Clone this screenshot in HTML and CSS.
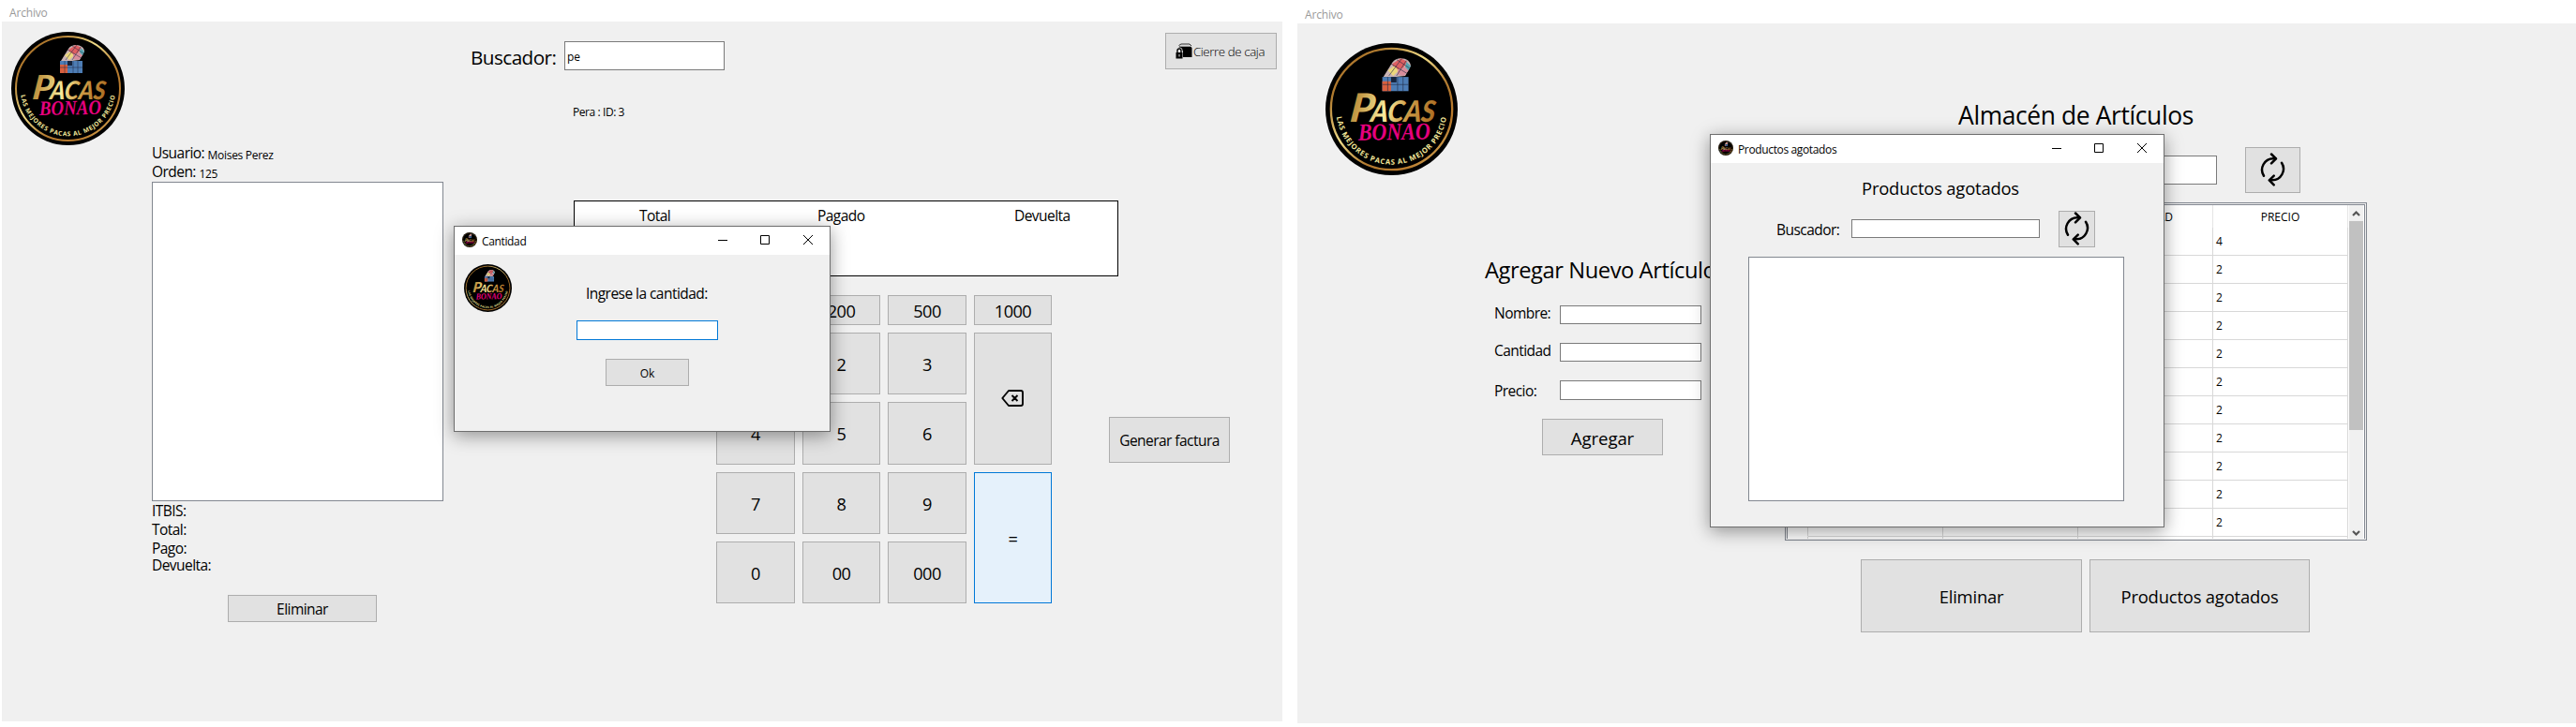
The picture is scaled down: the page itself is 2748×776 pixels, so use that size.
FILE: index.html
```html
<!DOCTYPE html>
<html lang="es">
<head>
<meta charset="utf-8">
<title>Pacas Bonao</title>
<link rel="stylesheet" href="styles.css">
</head>
<body>
<svg class="defs" aria-hidden="true">
  <defs>
    <linearGradient id="gold" gradientUnits="userSpaceOnUse" x1="22" x2="103" y1="50" y2="62">
      <stop offset="0" stop-color="#b5832f"/><stop offset=".4" stop-color="#f8ec9c"/><stop offset=".62" stop-color="#d0a04a"/><stop offset="1" stop-color="#a8681f"/>
    </linearGradient>
    <linearGradient id="ring" x1="0" x2="1" y1="0" y2="1">
      <stop offset="0" stop-color="#a8702a"/><stop offset=".2" stop-color="#b07a2e"/><stop offset=".42" stop-color="#f0dc88"/><stop offset=".62" stop-color="#b27a30"/><stop offset=".8" stop-color="#b8792c"/><stop offset="1" stop-color="#e6cf7c"/>
    </linearGradient>
    <path id="curve" d="M10 66A50.800 50.800 0 0 0 111 66"/>
  </defs>
  <symbol id="logo" viewBox="0 0 121 121">
    <circle cx="60.5" cy="60.5" r="60.5" fill="#000"/>
    <circle cx="60.5" cy="60.5" r="55.5" fill="none" stroke="url(#ring)" stroke-width="2"/>
    <path d="M52 31h24v13H52z" fill="#4d7db5"/>
    <path d="M52 35h8v9h-8z" fill="#d9603f"/>
    <path d="M60 31h5v5h-5z" fill="#16243c"/>
    <path d="M53 31l8-13c2-3 5-4 8-4 5 0 9 3 9 7l-5 9-8 1z" fill="#c9b3b4"/>
    <path d="M61 19l8-5 6 3-4 6-7 2z" fill="#df5f62"/>
    <path d="M57 25l6-4 4 4-5 5z" fill="#ecd77c"/>
    <path d="M66 24l7-2 3 3-4 5-6-1z" fill="#d98d9b"/>
    <path d="M74 17l4 4-2 4-3-3z" fill="#58a5b2"/>
    <path d="M52 38h24M57 31v13M66 31v13M71 31v13M60 19l15 9M65 15l12 8M58 30l12-16M65 30l9-14" fill="none" stroke="#1d2740" stroke-width=".5"/>
    <g fill="url(#gold)" transform="translate(8.500 0) skewX(-7)" font-family="Lato, sans-serif" font-weight="900" font-style="italic">
      <text x="22" y="72" font-size="36" textLength="22" lengthAdjust="spacingAndGlyphs">P</text>
      <text x="41" y="72" font-size="27" textLength="59" lengthAdjust="spacingAndGlyphs">ACAS</text>
    </g>
    <text x="30" y="88.5" transform="rotate(-1 60 88)" fill="#e6007e" font-family="Liberation Serif, serif" font-weight="700" font-style="italic" font-size="22" textLength="66" lengthAdjust="spacingAndGlyphs">BONAO</text>
    <text fill="#f3e79a" font-family="Open Sans, sans-serif" font-weight="700" font-size="6.6" letter-spacing=".62" text-anchor="middle"><textPath href="#curve" startOffset="50%">LAS MEJORES PACAS AL MEJOR PRECIO</textPath></text>
  </symbol>
  <symbol id="refresh" viewBox="0 0 27 36">
    <g fill="none" stroke="#000" stroke-width="2.5" stroke-linecap="round" stroke-linejoin="round">
      <path d="M4 24.7A12 12 0 0 1 14 6.2h2.5"/>
      <path d="M12 1.5l5 4.8-5 5"/>
      <path d="M23 10.8A12 12 0 0 1 13 29.3h-2.500"/>
      <path d="M14.700 24.700l-4.900 4.700 4.900 4.900"/>
    </g>
  </symbol>
  <symbol id="controls" viewBox="0 0 102 12">
    <path d="M0 6.500h10M45.500 1.500h9v9h-9zM91 1l10 10M101 1L91 11" fill="none" stroke="#000"/>
  </symbol>
</svg>

<main class="desktop">
  <section class="window window-sales">
    <header class="menu">Archivo</header>
    <div class="client">
      <div class="side"><svg class="logo"><use href="#logo"/></svg></div>

      <div class="order">
        <div class="line">Usuario: <span class="value">Moises Perez</span></div>
        <div class="line">Orden: <span class="value">125</span></div>
        <div class="list order-list"></div>
        <div class="line">ITBIS:</div>
        <div class="line">Total:</div>
        <div class="line">Pago:</div>
        <div class="line line-tight">Devuelta:</div>
        <button class="btn btn-remove">Eliminar</button>
      </div>

      <div class="register">
        <div class="search"><span class="search-label">Buscador:</span><span class="field search-field">pe</span></div>
        <div class="match">Pera : ID: 3</div>
        <div class="totals"><span>Total</span><span>Pagado</span><span>Devuelta</span></div>
        <div class="keypad">
          <button class="btn">100</button><button class="btn">200</button><button class="btn">500</button><button class="btn">1000</button>
          <button class="btn">1</button><button class="btn">2</button><button class="btn">3</button>
          <button class="btn key-tall key-back" aria-label="Borrar"><svg width="24" height="18" viewBox="0 0 24 18"><path d="M8 1h13q2 0 2 2v12q0 2-2 2H8L1.300 9zM11.500 6l6 6M17.500 6l-6 6" fill="none" stroke="#000" stroke-width="1.900" stroke-linejoin="round"/></svg></button>
          <button class="btn">4</button><button class="btn">5</button><button class="btn">6</button>
          <button class="btn">7</button><button class="btn">8</button><button class="btn">9</button>
          <button class="btn key-tall key-equal">=</button>
          <button class="btn">0</button><button class="btn">00</button><button class="btn">000</button>
        </div>
      </div>

      <div class="actions">
        <button class="btn btn-close"><svg width="18" height="17" viewBox="0 0 18 17"><path d="M4 3.500h12l1.500 1.500v10H8V9L5 5H3.500z"/><path d="M3.500 2.500L6 1h9l2 2" fill="none" stroke="#333"/><path d="M5 3.200h11" stroke="#bbb" stroke-width=".8"/><path d="M.5 10h7v6.500h-7z"/><path d="M2 10V8a2 2 0 0 1 4 0v2" fill="none" stroke="#e1e1e1" stroke-width="3"/><path d="M2 10.500V8a2 2 0 0 1 4 0v2.500" fill="none" stroke="#000" stroke-width="1.400"/><path d="M4 12v2.500" stroke="#ddd"/></svg><span>Cierre de caja</span></button>
        <button class="btn btn-invoice">Generar factura</button>
      </div>
    </div>
  </section>

  <section class="window window-stock">
    <header class="menu">Archivo</header>
    <div class="client">
      <div class="side"><svg class="logo"><use href="#logo"/></svg></div>

      <div class="form">
        <h2>Agregar Nuevo Artículo</h2>
        <div class="row"><label>Nombre:</label><span class="field"></span></div>
        <div class="row"><label>Cantidad:</label><span class="field"></span></div>
        <div class="row row-price"><label>Precio:</label><span class="field"></span></div>
        <button class="btn btn-add">Agregar</button>
      </div>

      <div class="stock">
        <h1>Almacén de Artículos</h1>
        <div class="stock-search"><span class="field"></span><button class="btn" aria-label="Actualizar"><svg width="27" height="36"><use href="#refresh"/></svg></button></div>
        <div class="frame"><div class="frame-inner">
          <div class="table">
            <div class="tr th"><span></span><span></span><span></span><span>CANTIDAD</span><span>PRECIO</span></div>
            <div class="tr"><span>1</span><span></span><span></span><span></span><span>4</span></div>
            <div class="tr"><span>2</span><span></span><span></span><span></span><span>2</span></div>
            <div class="tr"><span>3</span><span></span><span></span><span></span><span>2</span></div>
            <div class="tr"><span>4</span><span></span><span></span><span></span><span>2</span></div>
            <div class="tr"><span>5</span><span></span><span></span><span></span><span>2</span></div>
            <div class="tr"><span>6</span><span></span><span></span><span></span><span>2</span></div>
            <div class="tr"><span>7</span><span></span><span></span><span></span><span>2</span></div>
            <div class="tr"><span>8</span><span></span><span></span><span></span><span>2</span></div>
            <div class="tr"><span>9</span><span></span><span></span><span></span><span>2</span></div>
            <div class="tr"><span>10</span><span></span><span></span><span></span><span>2</span></div>
            <div class="tr"><span>11</span><span></span><span></span><span></span><span>2</span></div>
            <div class="tr tr-cut"><span></span><span></span><span></span><span></span><span></span></div>
          </div>
          <div class="scroll">
            <svg width="15" height="17" viewBox="0 0 15 17"><path d="M4 11l3.500-3.500L11 11" fill="none" stroke="#555" stroke-width="2.200"/></svg>
            <div class="thumb"></div>
            <svg width="15" height="17" viewBox="0 0 15 17"><path d="M4 9l3.500 3.500L11 9" fill="none" stroke="#555" stroke-width="2.200"/></svg>
          </div>
        </div></div>
        <div class="stock-actions"><button class="btn">Eliminar</button><button class="btn">Productos agotados</button></div>
      </div>
    </div>
  </section>

  <div class="dialog dialog-qty">
    <header class="titlebar"><svg class="mini"><use href="#logo"/></svg><span>Cantidad</span><svg class="controls"><use href="#controls"/></svg></header>
    <div class="qty-body">
      <svg class="qty-logo"><use href="#logo"/></svg>
      <div class="qty-form">
        <div class="line">Ingrese la cantidad:</div>
        <span class="field field-focus"></span>
        <button class="btn btn-ok">Ok</button>
      </div>
    </div>
  </div>

  <div class="dialog dialog-out">
    <header class="titlebar"><svg class="mini"><use href="#logo"/></svg><span>Productos agotados</span><svg class="controls"><use href="#controls"/></svg></header>
    <div class="out-body">
      <h3>Productos agotados</h3>
      <div class="out-search"><span class="line">Buscador:</span><span class="field"></span><button class="btn" aria-label="Actualizar"><svg width="27" height="36"><use href="#refresh"/></svg></button></div>
      <div class="list"></div>
    </div>
  </div>
</main>
</body>
</html>
```
FILE: styles.css
```css
* { box-sizing: border-box; }
body {
  margin: 0;
  background: #fff;
  color: #000;
  font: 15.5px/20px "Open Sans", "Noto Sans", sans-serif;
  letter-spacing: -0.035em;
}
h1, h2, h3 { margin: 0; font-weight: 400; white-space: nowrap; }
svg { display: block; flex: none; letter-spacing: 0; }
.defs { position: absolute; width: 0; height: 0; }

.desktop { position: relative; display: flex; width: 2748px; height: 776px; overflow: hidden; }
.window { flex: none; display: flex; flex-direction: column; }
.window-sales { width: 1366px; margin-left: 2px; }
.window-stock { width: 1364px; margin-left: 16px; }
.menu { padding-left: 8px; font-size: 12px; letter-spacing: -0.015em; color: #9a9a9a; }
.window-sales .menu { height: 23px; line-height: 27px; }
.window-stock .menu { height: 25px; line-height: 31px; }
.client { display: flex; align-items: flex-start; height: 747px; background: #f0f0f0; }

.btn {
  display: flex; align-items: center; justify-content: center;
  padding: 0; border: 1px solid #adadad; background: #e1e1e1;
  color: #000; font: inherit; letter-spacing: inherit; white-space: nowrap;
}
.field { display: block; border: 1px solid #7a7a7a; background: #fff; }
.list { border: 1px solid #828790; background: #fff; }
.line { height: 20px; white-space: nowrap; }
.line-tight { margin-top: -2px; }
.value { font-size: 12px; vertical-align: -1px; letter-spacing: -0.025em; }

/* Sales window */
.window-sales .side { flex: none; width: 160px; padding: 11px 0 0 10px; }
.window-sales .logo { width: 121px; height: 121px; }
.order { flex: none; width: 311px; padding-top: 130px; }
.order-list { height: 341px; margin-top: 1px; }
.btn-remove { width: 159px; height: 29px; margin: 22px 0 0 81px; padding-top: 1px; }
.register { flex: none; width: 691px; margin-left: 29px; padding-top: 21px; }
.search { display: flex; }
.search-label { width: 100px; padding-top: 7px; font-size: 20.7px; }
.search-field { width: 171px; height: 31px; padding: 6px 0 0 2px; font-size: 12px; letter-spacing: 0; }
.match { height: 20px; margin: 35px 0 0 109px; font-size: 12px; letter-spacing: -0.035em; }
.totals {
  display: grid; grid-template-columns: 190px 210px 1fr;
  height: 81px; margin: 84px 0 0 110px; padding: 5px 0 0 69px;
  border: 1px solid #000; background: #fff;
}
.keypad {
  display: grid; gap: 8px; margin: 20px 0 0 262px;
  grid-template-columns: 84px 83px 84px 83px;
  grid-template-rows: 32px 66px 67px 66px 66px;
  font-size: 18.2px;
}
.keypad .btn { padding-top: 1px; }
.key-tall { grid-row: span 2; }
.keypad .key-back { padding: 0 1px 1px 0; }
.key-equal { border-color: #0078d7; background: #e5f1fb; }
.actions { flex: none; display: flex; flex-direction: column; align-items: flex-end; width: 175px; padding: 12px 6px 0 0; }
.btn-close { width: 119px; height: 39px; gap: 1px; padding-right: 2px; font-size: 13.3px; font-weight: 300; letter-spacing: -0.03em; }
.btn-invoice { width: 129px; height: 49px; margin: 371px 50px 0 0; }

/* Stock window */
.window-stock .side { flex: none; width: 200px; padding: 21px 0 0 30px; }
.window-stock .logo { width: 141px; height: 141px; }
.form { flex: none; width: 320px; padding-top: 248px; }
.form h2 { padding-bottom: 3px; font-size: 23.7px; line-height: 30px; letter-spacing: -0.018em; }
.row { display: flex; height: 20px; margin: 20px 0 0 10px; }
.row label { width: 61px; height: 22px; margin: -2px 9px 0 0; overflow: hidden; }
.row .field { width: 151px; }
.row-price { height: 21px; }
.row-price label { margin-top: 1px; }
.btn-add { width: 129px; height: 39px; margin: 20px 0 0 61px; padding-top: 2px; font-size: 18.6px; letter-spacing: -0.005em; }
.stock { flex: none; width: 621px; padding-top: 80px; }
.stock h1 { text-align: center; font-size: 26.4px; line-height: 36px; letter-spacing: -0.014em; }
.stock-search { display: flex; align-items: flex-start; margin: 16px 0 0 196px; }
.stock-search .field { width: 265px; height: 31px; margin: 9px 30px 0 0; }
.stock-search .btn { width: 59px; height: 49px; padding-bottom: 1px; }
.frame { height: 361px; margin-top: 10px; padding: 1px 1px 0; border: 1px solid #828790; background: #f0f0f0; }
.frame-inner { display: flex; height: 357px; border: 1px solid #828790; border-bottom: 0; background: #fff; }
.table { width: 598px; overflow: hidden; font-size: 12px; letter-spacing: 0; }
.tr { display: grid; grid-template-columns: 22px repeat(4, 144px); height: 30px; }
.tr span { padding: 5px 0 0 3px; border-right: 1px solid #d8d8d8; border-bottom: 1px solid #d8d8d8; }
.tr span:first-child { padding: 5px 0 0; text-align: center; border-bottom-color: #fff; }
.th { height: 24px; }
.th span { padding: 3px 0 0; border-bottom: 0; border-color: #e5e5e5; text-align: center; }
.tr-cut { height: 3px; }
.tr-cut span, .tr-cut span:first-child { padding: 0; border-bottom: 0; }
.scroll { display: flex; flex-direction: column; width: 15px; margin-left: 1px; background: #f0f0f0; }
.thumb { height: 223px; margin-bottom: auto; background: #c1c1c1; }
.stock-actions { display: grid; grid-template-columns: 236px 235px; gap: 8px; height: 78px; margin: 20px 0 0 81px; font-size: 18.4px; letter-spacing: -0.01em; }
.stock-actions .btn { padding-top: 1px; }

/* Dialogs float over the main windows */
.dialog { position: absolute; border: 1px solid #6e6e6e; background: #f0f0f0; box-shadow: 0 4px 18px rgba(0, 0, 0, .4); }
.dialog-qty { left: 484px; top: 241px; width: 402px; height: 220px; }
.dialog-out { left: 1824px; top: 143px; width: 485px; height: 420px; }
.titlebar { display: flex; height: 30px; padding: 6px 17px 0 8px; gap: 5px; background: #fff; font-size: 12px; line-height: 19px; letter-spacing: -0.03em; }
.titlebar .mini { width: 16px; height: 16px; }
.titlebar .controls { width: 102px; height: 12px; margin: 2px 0 0 auto; }
.qty-body { display: flex; padding: 10px 0 0 10px; }
.qty-logo { width: 51px; height: 51px; }
.qty-form { width: 151px; margin: 21px 0 0 69px; }
.qty-form .line { padding-left: 10px; }
.qty-form .field { height: 21px; margin-top: 19px; }
.qty-form .field-focus { border-color: #0078d7; }
.btn-ok { width: 89px; height: 29px; margin: 20px 0 0 31px; padding-top: 2px; font-size: 12px; letter-spacing: 0; }
.out-body { padding: 16px 0 0 40px; }
.out-body h3 { padding-left: 121px; font-size: 18.4px; line-height: 22px; letter-spacing: -0.01em; }
.out-search { display: flex; height: 39px; margin: 13px 0 10px; }
.out-search .line { width: 110px; padding: 10px 0 0 30px; }
.out-search .field { width: 201px; height: 20px; margin: 9px 20px 0 0; }
.out-search .btn { width: 39px; height: 39px; padding-bottom: 1px; }
.out-body .list { width: 401px; height: 261px; }
```
